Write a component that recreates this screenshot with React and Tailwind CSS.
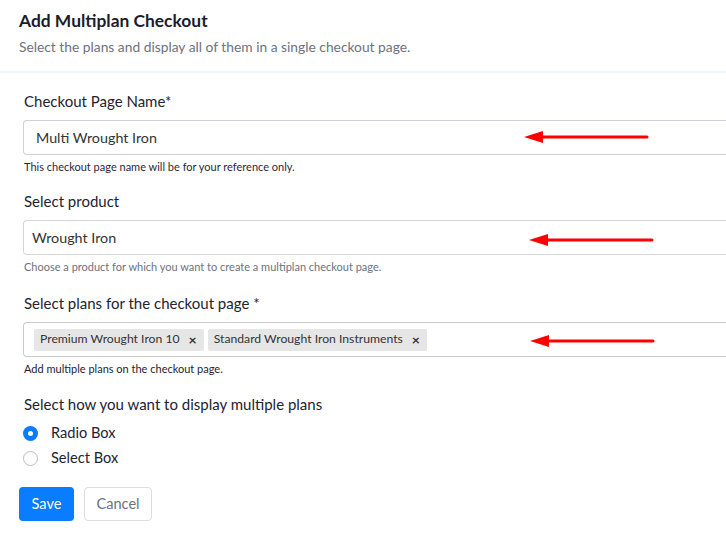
import React from "react";

function Arrow({ className }) {
  return (
    <svg className={className} width="126" height="12" viewBox="0 0 126 12">
      <line x1="18" y1="6" x2="123" y2="6" stroke="#ff0000" strokeWidth="3" strokeLinecap="round" />
      <polygon points="0,6 19,0 19,12" fill="#ff0000" />
    </svg>
  );
}

function Chip({ label }) {
  return (
    <div className="flex items-center h-[22px] bg-[#e6e6e6] rounded-[2px] pl-[6px] pr-[7px] text-[12.2px] text-[#333]">
      <span>{label}</span>
      <span className="ml-[9px] text-[14px] leading-none font-bold text-[#333]">×</span>
    </div>
  );
}

export default function App() {
  return (
    <div className="w-[726px] h-[535px] bg-white overflow-hidden font-['Lato',sans-serif] text-[#212529]">
      <div className="pl-[19px] pt-[10px] h-[73px] border-b-2 border-[#eef5fc]">
        <h1 className="text-[17.4px] font-bold text-[#1c1c2b] leading-[22px]">Add Multiplan Checkout</h1>
        <p className="mt-[7px] text-[13.8px] text-[#6c727e] leading-[16px]">Select the plans and display all of them in a single checkout page.</p>
      </div>

      <div className="pl-[23px] pt-[18px]">
        <div>
          <div className="text-[15px] text-[#23232f] leading-[20px] ml-[1px]">Checkout Page Name*</div>
          <div className="relative mt-[9px] h-[35px] border border-[#cfd1d6] border-r-0 rounded-l-[4px] flex items-center pl-[12px] text-[14.3px] text-[#333]">
            Multi Wrought Iron
            <Arrow className="absolute left-[500px] top-[10px]" />
          </div>
          <div className="mt-[5px] text-[11px] text-[#2e1f3a] leading-[14px] ml-[1px]">This checkout page name will be for your reference only.</div>
        </div>

        <div className="mt-[17px]">
          <div className="text-[15px] text-[#23232f] leading-[20px] ml-[1px]">Select product</div>
          <div className="relative mt-[9px] h-[35px] border border-[#d6d6d6] border-r-0 rounded-l-[4px] flex items-center pl-[8px] text-[14.3px] text-[#333]">
            Wrought Iron
            <Arrow className="absolute left-[505px] top-[13px]" />
          </div>
          <div className="mt-[5px] text-[11px] text-[#6c727e] leading-[14px] ml-[1px]">Choose a product for which you want to create a multiplan checkout page.</div>
        </div>

        <div className="mt-[19px]">
          <div className="text-[15px] text-[#23232f] leading-[20px] ml-[1px]">Select plans for the checkout page *</div>
          <div className="relative mt-[9px] h-[35px] border border-[#cccccc] border-r-0 rounded-l-[4px] flex items-center gap-[4px] pl-[10px]">
            <Chip label="Premium Wrought Iron 10" />
            <Chip label="Standard Wrought Iron Instruments" />
            <Arrow className="absolute left-[506px] top-[12px]" />
          </div>
          <div className="mt-[5px] text-[11px] text-[#23232f] leading-[14px] ml-[1px]">Add multiple plans on the checkout page.</div>
        </div>

        <div className="mt-[18px]">
          <div className="text-[15px] text-[#23232f] leading-[20px] ml-[1px]">Select how you want to display multiple plans</div>
          <div className="mt-[9px] flex items-center h-[20px]">
            <span className="w-[15px] h-[15px] rounded-full bg-[#0a7cff] flex items-center justify-center">
              <span className="w-[5px] h-[5px] rounded-full bg-white" />
            </span>
            <span className="ml-[13px] text-[14.6px] text-[#23232f]">Radio Box</span>
          </div>
          <div className="mt-[5px] flex items-center h-[20px]">
            <span className="w-[15px] h-[15px] rounded-full border border-[#b8bcc4] bg-white" />
            <span className="ml-[13px] text-[14.6px] text-[#23232f]">Select Box</span>
          </div>
        </div>
      </div>

      <div className="pl-[19px] mt-[19px] flex gap-[10px]">
        <button className="h-[34px] w-[55px] rounded-[4px] bg-[#0a7cff] text-white text-[14.6px]">Save</button>
        <button className="h-[34px] w-[68px] rounded-[4px] border border-[#dddddd] bg-white text-[#6c727e] text-[14.6px]">Cancel</button>
      </div>
    </div>
  );
}
